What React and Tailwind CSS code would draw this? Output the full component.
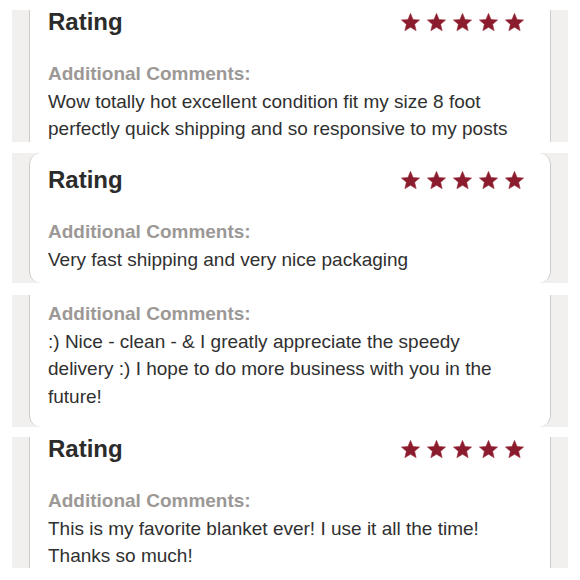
import React from "react";

const Star = () => (
  <svg width="21" height="21" viewBox="0 0 24 24" className="block">
    <path
      d="M12 1.5L14.94 8.46L22.46 9.1L16.76 14.05L18.47 21.4L12 17.5L5.53 21.4L7.24 14.05L1.54 9.1L9.06 8.46Z"
      fill="#8a1c2d"
      stroke="#9a2c3c"
      strokeWidth="0.6"
      strokeLinejoin="round"
    />
  </svg>
);

const Stars = () => (
  <div className="flex gap-[5px]">
    <Star />
    <Star />
    <Star />
    <Star />
    <Star />
  </div>
);

const RatingRow = () => (
  <div className="flex items-center justify-between h-[24px]">
    <div className="text-[24px] leading-[24px] font-bold text-[#2b2b2b]">Rating</div>
    <Stars />
  </div>
);

const Comments = ({ lines, className = "" }) => (
  <div className={"text-[19px] leading-[27.5px] " + className}>
    <div className="font-bold text-[#9c9896]">Additional Comments:</div>
    {lines.map((l, i) => (
      <div key={i} className="whitespace-nowrap text-[#303030]">
        {l}
      </div>
    ))}
  </div>
);

const Panel = ({ height, round, children, className = "" }) => (
  <div className={"mx-[12px] bg-[#f2f0ee] " + className} style={{ height }}>
    <div
      className={
        "mx-[17px] h-full bg-white border-l border-r border-[#cdcbc9] pl-[18px] pr-[25px] " +
        round
      }
    >
      {children}
    </div>
  </div>
);

export default function App() {
  return (
    <div
      className="w-[580px] h-[580px] bg-white overflow-hidden flex flex-col"
      style={{ fontFamily: '"Liberation Sans", Arial, Helvetica, sans-serif' }}
    >
      <Panel height={132} round="" className="mt-[10px]">
        <RatingRow />
        <Comments
          className="mt-[26px]"
          lines={[
            "Wow totally hot excellent condition fit my size 8 foot",
            "perfectly quick shipping and so responsive to my posts",
          ]}
        />
      </Panel>
      <Panel height={130} round="rounded-[12px] pt-[15px]" className="mt-[11px]">
        <RatingRow />
        <Comments className="mt-[26px]" lines={["Very fast shipping and very nice packaging"]} />
      </Panel>
      <Panel height={132} round="rounded-b-[12px] pt-[5px]" className="mt-[12px]">
        <Comments
          lines={[
            ":) Nice - clean - & I greatly appreciate the speedy",
            "delivery :) I hope to do more business with you in the",
            "future!",
          ]}
        />
      </Panel>
      <Panel height={131} round="" className="mt-[10px]">
        <RatingRow />
        <Comments
          className="mt-[26px]"
          lines={["This is my favorite blanket ever! I use it all the time!", "Thanks so much!"]}
        />
      </Panel>
    </div>
  );
}
